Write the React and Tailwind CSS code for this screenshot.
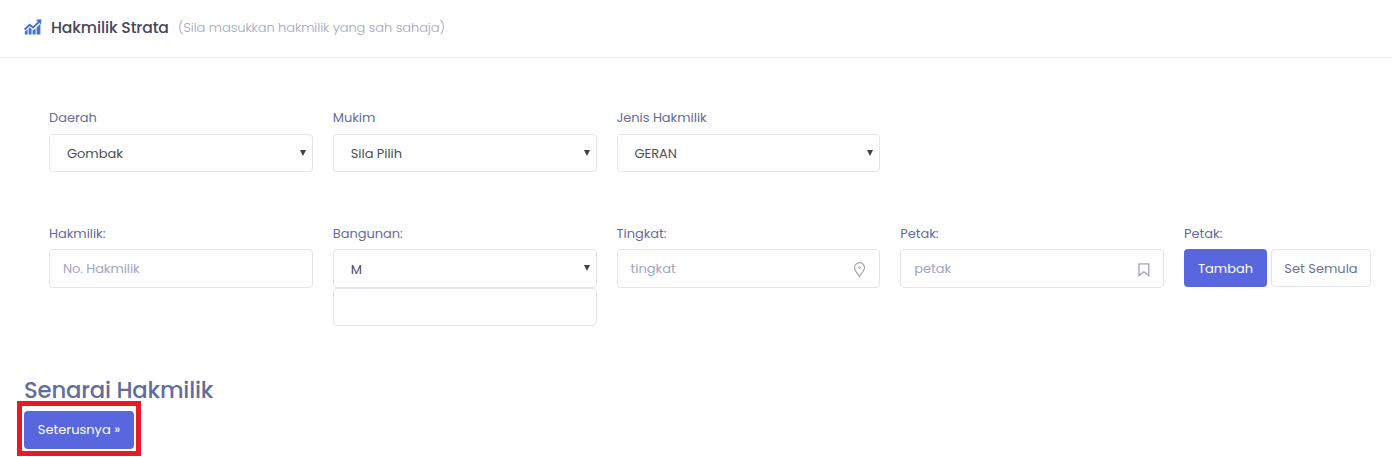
function ChartIcon() {
  return (
    <svg className="mb-[2px] h-[16px] w-[18px] shrink-0" viewBox="0 0 18 16" fill="none">
      <path d="M0.6 10.6 5.6 5.8 9 8.6 15 2.8" stroke="#4770d3" strokeWidth="1.9" />
      <path d="M12 0.8 17.4 0.3 17 5.6Z" fill="#4770d3" />
      <path d="M0.8 12.6 3.6 10.2V15.6H0.8ZM4.6 9.2 5.6 8.4 7.6 10V15.6H4.6ZM8.6 11 9.2 11.3 11.6 9.2V15.6H8.6ZM12.6 8.2 16.4 4.8V15.6H12.6Z" fill="#4770d3" />
    </svg>
  );
}

function Label({ children }) {
  return <div className="h-[17px] whitespace-nowrap text-[13px] leading-[17px] tracking-[-0.05px] text-[#646c9a]">{children}</div>;
}

function Box({ children, className = "h-[38px]" }) {
  return <div className={`flex w-full items-center rounded border border-[#e2e5ec] bg-white text-[13px] ${className}`}>{children}</div>;
}

function Select({ value, className, arrowClass = "" }) {
  return (
    <Box className={className}>
      <span className="ml-[17px] flex-1 pt-[2px] tracking-[-0.05px] text-[#495057]">{value}</span>
      <svg className={`mr-[6px] h-[6px] w-[6px] ${arrowClass}`} viewBox="0 0 6 6">
        <path d="M0 0H6L3 6Z" fill="#3f4347" />
      </svg>
    </Box>
  );
}

export default function App() {
  return (
    <div className="h-[457px] overflow-hidden bg-white font-['Poppins','Inter',sans-serif]">
      <header className="flex h-[58px] items-center border-b border-[#ebedf2] pb-[2px] pl-6">
        <ChartIcon />
        <h3 className="ml-[9px] w-[127px] whitespace-nowrap text-[15.6px] font-medium tracking-[-0.12px] text-[#48465b]">Hakmilik Strata</h3>
        <small className="pt-px text-[13px] font-light whitespace-nowrap tracking-[-0.07px] text-[#a1a5bd]">(Sila masukkan hakmilik yang sah sahaja)</small>
      </header>

      <div className="grid grid-cols-[repeat(4,263.75px)_auto] gap-x-5 pt-[51px] pl-[49px]">
        <div>
          <Label>Daerah</Label>
          <div className="mt-2"><Select value="Gombak" /></div>
        </div>
        <div>
          <Label>Mukim</Label>
          <div className="mt-2"><Select value="Sila Pilih" /></div>
        </div>
        <div>
          <Label>Jenis Hakmilik</Label>
          <div className="mt-2"><Select value="GERAN" /></div>
        </div>
      </div>

      <div className="grid h-[153px] grid-cols-[repeat(4,263.75px)_auto] gap-x-5 pt-[53px] pl-[49px]">
        <div>
          <Label>Hakmilik:</Label>
          <div className="mt-[7px]">
            <Box className="h-[39px]"><span className="ml-[13px] tracking-[-0.1px] text-[#a1a5bd]">No. Hakmilik</span></Box>
          </div>
        </div>
        <div>
          <Label>Bangunan:</Label>
          <div className="mt-[7px]">
            <Select value="M" className="h-[39px]" arrowClass="mb-[2px]" />
            <Box />
          </div>
        </div>
        <div>
          <Label>Tingkat:</Label>
          <div className="mt-[7px]">
            <Box className="h-[39px]">
              <span className="ml-[13px] flex-1 text-[#a1a5bd]">tingkat</span>
              <svg className="mt-[2px] mr-[14px] h-[16px] w-[12px]" viewBox="0 0 12 16" fill="none" stroke="#a0a4b2">
                <path d="M6.5 14.6C5.3 12.2 1.5 9 1.5 5.6A5 5 0 0 1 11.5 5.6C11.5 9 7.7 12.2 6.5 14.6Z" strokeWidth="1.2" />
                <circle cx="6.5" cy="5.5" r="0.9" />
              </svg>
            </Box>
          </div>
        </div>
        <div>
          <Label>Petak:</Label>
          <div className="mt-[7px]">
            <Box className="h-[39px]">
              <span className="ml-[13px] flex-1 text-[#a1a5bd]">petak</span>
              <svg className="mt-[2px] mr-[13px] h-[14px] w-[12px]" viewBox="0 0 12 14" fill="none" stroke="#a0a4b2">
                <path d="M1 0.8H10.8V12.6L5.9 8.8 1 12.6Z" strokeWidth="1.3" />
              </svg>
            </Box>
          </div>
        </div>
        <div>
          <Label>Petak:</Label>
          <div className="mt-[7px] flex gap-1">
            <button className="h-[38px] w-[83px] rounded bg-[#5867dd] pt-px text-[13px] text-white">Tambah</button>
            <button className="h-[38px] w-[100px] rounded border border-[#e2e5ec] pt-px text-[13px] whitespace-nowrap text-[#6c7293]">Set Semula</button>
          </div>
        </div>
      </div>

      <h2 className="mt-[50px] ml-6 h-[26px] text-[22.75px] leading-[30px] font-medium tracking-[-0.2px] whitespace-nowrap text-[#646c9a]">Senarai Hakmilik</h2>
      <div className="ml-[17px] h-[55px] w-[124px] border-5 border-[#e51c25] pt-[5px] pl-[2px]">
        <button className="h-[38px] w-[110px] rounded bg-[#5867dd] text-[13px] whitespace-nowrap text-white">Seterusnya »</button>
      </div>
    </div>
  );
}
